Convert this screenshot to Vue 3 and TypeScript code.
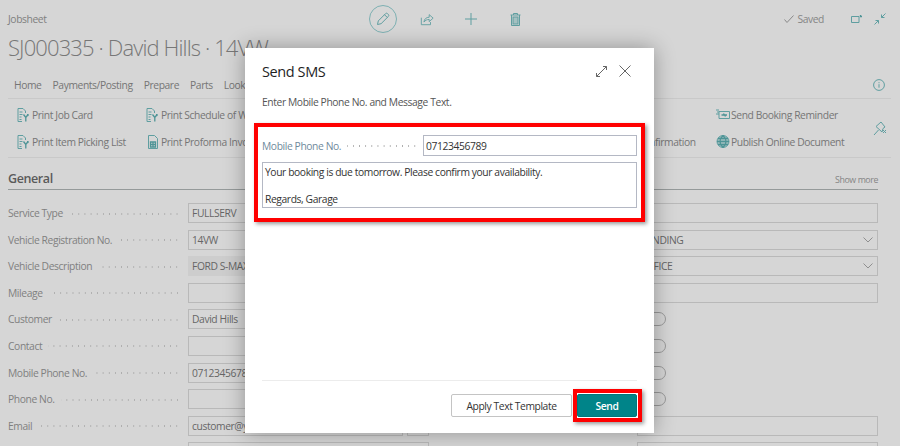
<template>
  <div class="page">
    <div class="card">
      <header class="topbar">
        <span class="crumb">Jobsheet</span>
        <div class="tools">
          <button type="button" class="tool tool-edit">
            <svg width="16" height="16" viewBox="0 0 16 16"><path d="M2.500 13.500l.8-3.600 7.200-7.200a1.500 1.500 0 0 1 2.100 0l.7.700a1.500 1.500 0 0 1 0 2.100l-7.200 7.200zM9.500 3.700l2.800 2.800" /></svg>
          </button>
          <button type="button" class="tool">
            <svg width="14" height="14" viewBox="0 0 16 16"><path d="M1.500 6.500v8h10.500v-3M4.500 11.500c.3-3.500 2.700-5.500 6-5.500V3l4.500 4-4.500 4V8.500c-2.500 0-4.500 1-6 3z" /></svg>
          </button>
          <button type="button" class="tool">
            <svg width="12" height="12" viewBox="0 0 12 12"><path d="M6 0v12M0 6h12" /></svg>
          </button>
          <button type="button" class="tool">
            <svg width="11" height="13" viewBox="0 0 11 13"><path d="M3.500 2V.5h4V2M.5 2h10M1.500 2v10.500h8V2" /><rect class="solid-soft" x="3" y="4" width="5" height="7" /></svg>
          </button>
        </div>
        <div class="status">
          <svg class="check" width="10" height="8" viewBox="0 0 10 8"><path d="M.5 4.500l2.500 3L9.500.5" /></svg>
          <span>Saved</span>
          <svg class="open-new" width="11" height="8" viewBox="0 0 11 8"><path d="M.5 1.500h7.500v6H.5z" /><path class="heavy" d="M9.500 0v1.500H11" /></svg>
          <svg class="collapse" width="12" height="12" viewBox="0 0 12 12"><path d="M11.500.5L7.500 4.500M7.500 1.500v3h3M.5 11.500l4-4M1.500 7.500h3v3" /></svg>
        </div>
      </header>

      <h1 class="title">SJ000335 · David Hills · 14VW</h1>

      <nav class="tabs">
        <span v-for="tab in tabs" :key="tab">{{ tab }}</span>
        <svg class="info" width="12" height="12" viewBox="0 0 12 12"><circle cx="6" cy="6" r="5.400" /><path d="M6 5.200v3.500M6 3.200v1" /></svg>
      </nav>

      <section class="actions">
        <div class="action-grid">
          <div v-for="action in actions" :key="action.label" class="action">
            <svg v-if="action.icon === 'print'" width="13" height="14" viewBox="0 0 13 14"><path d="M.5.500h5l2.500 2.500v2M.5.500v13h4M2 4h3M2 6.500h3M2 9h2M2 11.500h2" /><path class="heavy" d="M6 6.500l2.300 3 2.300-3M8.300 9.500v4M11 6.500l-1 1.300" /></svg>
            <svg v-else-if="action.icon === 'invoice'" width="13" height="14" viewBox="0 0 13 14"><path d="M2 .5h6l3 3v10H2z" /><path class="heavy" d="M4 7h5v5H4zM6.500 7v5M4 9.500h5" /></svg>
            <svg v-else-if="action.icon === 'reminder'" width="14" height="11" viewBox="0 0 14 11"><path d="M3 2.500h10.500v7H3z" /><path d="M0 1h3M1 3h2M0 5h3" /><path class="heavy" d="M5.500 6h3l-1-1.500M11 6H8.500l1 1.500" /></svg>
            <svg v-else width="13" height="13" viewBox="0 0 13 13"><circle class="solid-soft" cx="6.500" cy="6.500" r="6" /><path class="heavy" d="M.5 6.500h12M1.500 3.500h10M1.500 9.500h10M6.500.5c-4 3.500-4 8.500 0 12M6.500.5c4 3.500 4 8.500 0 12" /></svg>
            <span>{{ action.label }}</span>
          </div>
        </div>
        <svg class="pin" width="14" height="16" viewBox="0 0 14 16"><path d="M1 15l4.500-5M3 6.500l5-4.500 4 5-2 1.500-1 3.500-6-5.500zM10 10l3 3M13 10l-3 3" /></svg>
      </section>

      <div class="section-head">
        <h2>General</h2>
        <span>Show more</span>
      </div>

      <section class="fields">
        <div v-for="(field, index) in fields" :key="index" class="field">
          <label>{{ field.label }}</label>
          <i class="leader"></i>
          <div v-if="field.kind === 'toggle'" class="toggle"></div>
          <div v-else class="value-wrap">
            <div class="value" :class="{ readonly: field.kind === 'readonly' }">
              <span>{{ field.value }}</span>
              <svg v-if="field.kind === 'select'" width="10" height="6" viewBox="0 0 10 6"><path d="M.5.500L5 5 9.500.5" /></svg>
            </div>
            <div v-if="field.extra" class="value extra"></div>
          </div>
        </div>
      </section>
    </div>

    <div class="dialog">
      <div class="dialog-head">
        <h3>Send SMS</h3>
        <svg width="11" height="11" viewBox="0 0 11 11"><path d="M.5 10.500l10-10M7 .5h3.500V4M.5 7v3.500H4" /></svg>
        <svg width="12" height="12" viewBox="0 0 12 12"><path d="M.5.500l11 11M11.500.5l-11 11" /></svg>
      </div>
      <p class="hint">Enter Mobile Phone No. and Message Text.</p>

      <div class="marked">
        <div class="phone-row">
          <label>Mobile Phone No.</label>
          <i class="leader"></i>
          <input type="text" value="07123456789" />
        </div>
        <div class="message">
          <div>Your booking is due tomorrow. Please confirm your availability.</div>
          <div class="gap-line"></div>
          <div>Regards, Garage</div>
        </div>
      </div>

      <div class="dialog-foot">
        <button type="button" class="btn">Apply Text Template</button>
        <button type="button" class="btn btn-primary">Send</button>
      </div>
    </div>
  </div>
</template>

<script setup lang="ts">
interface Field {
  label: string;
  value?: string;
  kind?: 'readonly' | 'select' | 'toggle';
  extra?: boolean;
}

const tabs = ['Home', 'Payments/Posting', 'Prepare', 'Parts', 'Lookup'];

const actions = [
  { label: 'Print Job Card', icon: 'print' },
  { label: 'Print Schedule of Works', icon: 'print' },
  { label: 'Send SMS', icon: 'reminder' },
  { label: 'Send Booking Reminder', icon: 'reminder' },
  { label: 'Print Item Picking List', icon: 'print' },
  { label: 'Print Proforma Invoice', icon: 'invoice' },
  { label: 'Send Booking Confirmation', icon: 'reminder' },
  { label: 'Publish Online Document', icon: 'globe' },
];

const fields: Field[] = [
  { label: 'Service Type', value: 'FULLSERV' },
  { label: 'Status Code' },
  { label: 'Vehicle Registration No.', value: '14VW' },
  { label: 'Status', value: 'PENDING', kind: 'select' },
  { label: 'Vehicle Description', value: 'FORD S-MAX', kind: 'readonly' },
  { label: 'Location', value: 'OFFICE', kind: 'select' },
  { label: 'Mileage' },
  { label: 'Reference' },
  { label: 'Customer', value: 'David Hills' },
  { label: 'Courtesy Car', kind: 'toggle' },
  { label: 'Contact' },
  { label: 'Collection', kind: 'toggle' },
  { label: 'Mobile Phone No.', value: '07123456789' },
  { label: 'Delivery', kind: 'toggle' },
  { label: 'Phone No.' },
  { label: 'Waiting', kind: 'toggle' },
  { label: 'Email', value: 'customer@yourdomain.com', extra: true },
  { label: 'Booked By' },
  // only the top edge of this row shows in the window
  { label: '' },
  { label: '' },
];
</script>

<style>
body {
  background: #d6d6d6;
}
</style>

<style scoped>
.page {
  position: relative;
  width: 900px;
  height: 446px;
  overflow: hidden;
  background: #d6d6d6;
  color: #757575;
  font-family: 'Open Sans', 'Noto Sans', sans-serif;
  font-size: 10.300px;
  letter-spacing: -0.400px;
}

svg {
  flex: none;
  fill: none;
  stroke: #5f9ea0;
  stroke-width: 1;
}

.solid-soft {
  fill: #a4c0c1;
}

.heavy {
  stroke-width: 1.300;
  stroke: #4e9496;
}

.card {
  height: 446px;
  box-sizing: border-box;
  padding: 5px 22px 0 8px;
}

.topbar {
  display: flex;
  align-items: center;
  height: 28px;
}

.crumb {
  width: 361px;
  color: #808080;
}

.tools {
  display: flex;
  gap: 16px;
}

.tool {
  display: flex;
  align-items: center;
  justify-content: center;
  width: 28px;
  height: 28px;
  padding: 0;
  background: none;
  border: 0;
}

.tool-edit {
  border: 1px solid #7db0b2;
  border-radius: 50%;
}

.status {
  display: flex;
  align-items: center;
  margin-left: auto;
  color: #858585;
}

.check {
  margin-right: 3px;
  stroke: #8a8a8a;
}

.open-new {
  margin-left: 27px;
}

.collapse {
  margin-left: 12px;
  margin-right: -8px;
}

.title {
  margin: -1px 0 0;
  font-size: 22px;
  font-weight: 300;
  line-height: 30px;
  letter-spacing: -0.880px;
  color: #777;
}

.tabs {
  display: flex;
  align-items: center;
  gap: 11px;
  height: 26px;
  margin: 7px -13px 0 0;
  padding: 3px 0 0 6px;
  border-bottom: 1px solid #c9c9c9;
}

.info {
  margin-left: auto;
  margin-right: 6px;
}

.actions {
  display: flex;
  align-items: center;
  height: 58px;
  margin-right: -13px;
  padding-left: 9px;
  border-bottom: 1px solid #c9c9c9;
}

.action-grid {
  display: grid;
  grid-template-columns: 129px 413px 157px auto;
  grid-auto-rows: 27px;
}

.action {
  display: flex;
  align-items: center;
  white-space: nowrap;
}

.action svg {
  width: 14px;
  margin-right: 1px;
}

.pin {
  margin-left: auto;
  margin-right: 4px;
}

.section-head {
  display: flex;
  align-items: baseline;
  justify-content: space-between;
  height: 19px;
  padding-top: 12px;
  border-bottom: 1px solid #959a9a;
}

.section-head h2 {
  margin: 0;
  font-size: 12.500px;
  font-weight: 600;
  color: #5a5a5a;
}

.section-head span {
  font-size: 8.800px;
  color: #858585;
}

.fields {
  display: grid;
  grid-template-columns: 421px 421px;
  column-gap: 28px;
  row-gap: 6.600px;
  margin-top: 13px;
}

.field {
  display: flex;
  align-items: center;
  height: 20px;
}

.field label,
.phone-row label {
  white-space: nowrap;
  color: #808080;
}

.leader {
  flex: 1;
  height: 2px;
  margin: 1px 0 0 6px;
  background-image: radial-gradient(circle, #adadad 0.700px, transparent 0.800px);
  background-size: 6.150px 2px;
  background-position: right;
}

.field .leader {
  margin-right: 8px;
}

.value-wrap {
  display: flex;
  gap: 4px;
  width: 241px;
  flex: none;
}

.value {
  display: flex;
  flex: 1;
  align-items: center;
  justify-content: space-between;
  box-sizing: border-box;
  height: 20px;
  padding: 0 4px 0 3px;
  border: 1px solid #b9b9b9;
  color: #666;
  white-space: nowrap;
  overflow: hidden;
}

.value svg {
  stroke: #8f8f8f;
}

.readonly {
  background: #cdcdcd;
  border-color: #cdcdcd;
}

.extra {
  flex: none;
  width: 22px;
}

.toggle {
  box-sizing: border-box;
  width: 29px;
  height: 14px;
  margin-right: 212px;
  border: 1px solid #9a9a9a;
  border-radius: 7px;
}

.dialog {
  position: absolute;
  top: 48px;
  left: 245px;
  display: flex;
  flex-direction: column;
  box-sizing: border-box;
  width: 409px;
  height: 385px;
  padding: 0 17px 16px;
  background: #fff;
  color: #4a4a4a;
  box-shadow: 0 0 20px rgba(0, 0, 0, 0.32);
}

.dialog-head {
  display: flex;
  align-items: center;
  gap: 12px;
  height: 20px;
  margin-top: 13px;
  padding-right: 6px;
}

.dialog-head svg {
  stroke: #666;
}

.dialog-head h3 {
  flex: 1;
  margin: 0;
  font-size: 14.500px;
  font-weight: 500;
  color: #1f1f1f;
}

.hint {
  margin: 13px 0 0;
  line-height: 16px;
  color: #555;
}

.marked {
  position: relative;
  display: flex;
  flex-direction: column;
  gap: 6px;
  margin-top: 25px;
}

.marked::after {
  content: '';
  position: absolute;
  inset: -12px -8px -14px -8px;
  border: 4px solid #f00;
  box-shadow: 2px 2px 4px rgba(0, 0, 0, 0.4);
  pointer-events: none;
}

.phone-row {
  display: flex;
  align-items: center;
  height: 21px;
}

.phone-row label {
  color: #708a9c;
}

.phone-row .leader {
  margin-right: 5px;
}

.phone-row input {
  box-sizing: border-box;
  width: 214px;
  height: 21px;
  padding: 0 2px;
  border: 1px solid #b4b8c4;
  border-radius: 0;
  outline: 0;
  font: inherit;
  letter-spacing: inherit;
  color: #333;
}

.message {
  box-sizing: border-box;
  height: 46px;
  padding: 2px;
  border: 1px solid #b4b8c4;
  line-height: 14px;
  color: #333;
}

.gap-line {
  height: 13px;
}

.dialog-foot {
  display: flex;
  justify-content: flex-end;
  gap: 5px;
  margin-top: auto;
  padding-top: 13px;
  border-top: 1px solid #ececec;
}

.btn {
  box-sizing: border-box;
  width: 121px;
  height: 23px;
  padding: 0;
  background: #fff;
  border: 1px solid #c4c4c4;
  border-radius: 2px;
  font: inherit;
  font-weight: 500;
  letter-spacing: inherit;
  color: #333;
}

.btn-primary {
  position: relative;
  width: 60px;
  background: #008489;
  border-color: #00777b;
  font-weight: 600;
  color: #fff;
}

.btn-primary::after {
  content: '';
  position: absolute;
  inset: -6px -6px -6px -5px;
  border: 4px solid #f00;
  box-shadow: 2px 2px 4px rgba(0, 0, 0, 0.4);
}
</style>
